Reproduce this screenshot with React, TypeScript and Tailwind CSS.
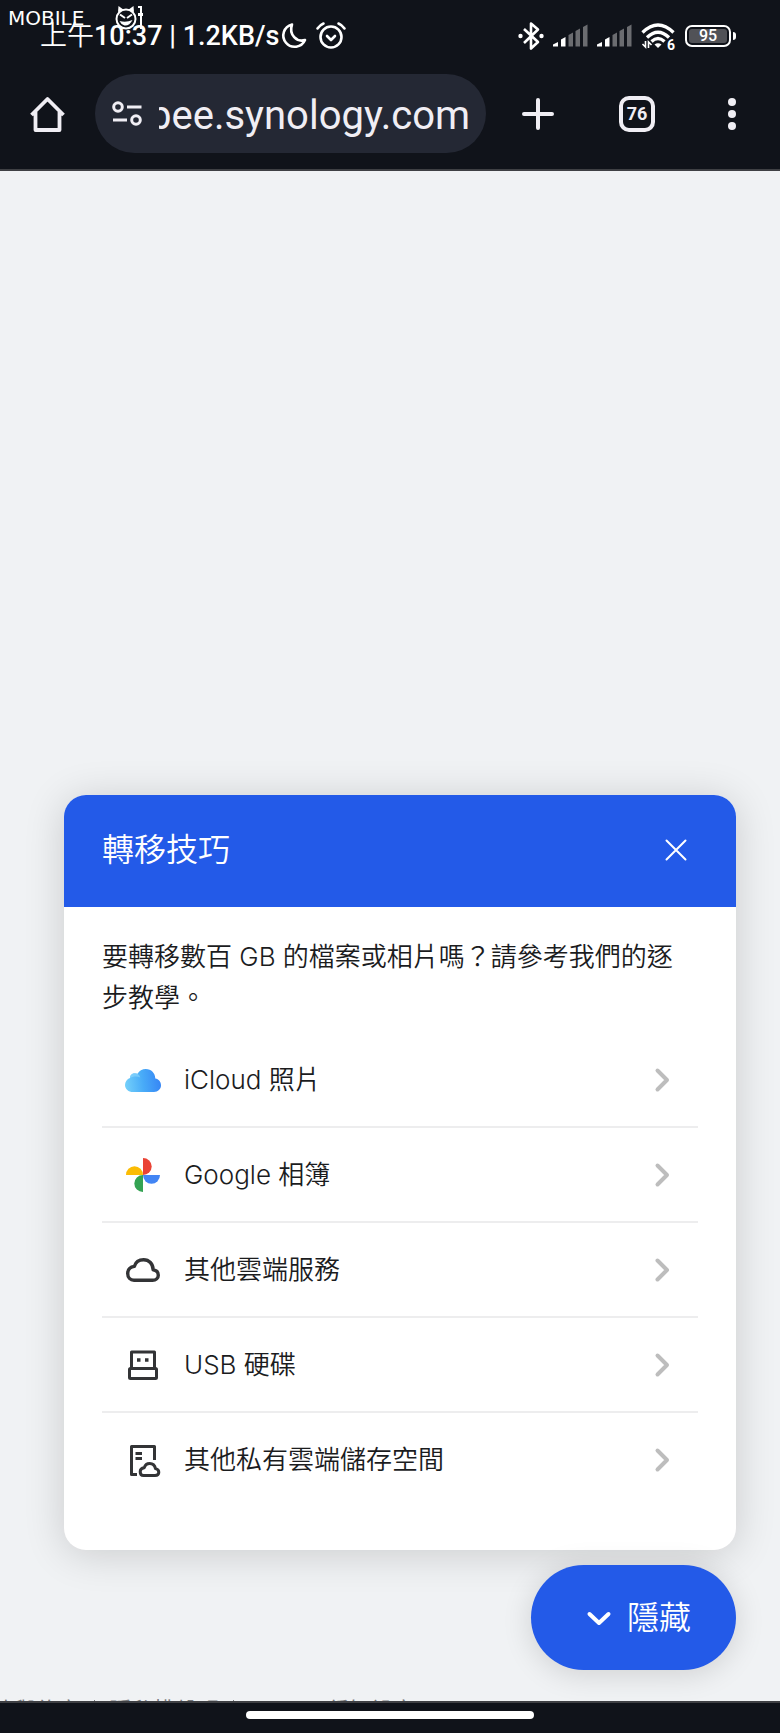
import { useEffect, useRef, useState } from 'react';

const CloudOutline = () => (
  <svg className="size-10" viewBox="0 0 40 40" fill="none" stroke="#333436" strokeWidth="3.4" strokeLinejoin="round">
    <path d="M11 30.300H29.500C33 30.300 35.300 28 35.300 25.200C35.300 22.300 33.200 20.300 30.200 19.900C30 13.800 26.100 9.700 20.600 9.700C16 9.700 12.500 12.300 11.300 16.400C7.400 17 4.700 19.600 4.700 23.500C4.700 27.500 7.400 30.300 11 30.300Z" />
  </svg>
);

const ICloudIcon = () => (
  <svg className="size-10" viewBox="0 0 40 40">
    <defs>
      <linearGradient id="icloud" x1="2" y1="24" x2="38" y2="20" gradientUnits="userSpaceOnUse">
        <stop offset="0" stopColor="#74d0fa" />
        <stop offset="0.5" stopColor="#48abf8" />
        <stop offset="1" stopColor="#3685f5" />
      </linearGradient>
    </defs>
    <path
      d="M10 32C5.500 32 2 28.900 2 24.900C2 21.600 4 19 7 17.900C6.900 15.200 9.200 13.200 12 13.200C12.900 13.200 13.700 13.400 14.500 13.800C16.200 10.900 19.200 9 22.800 9C28.200 9 32.300 13.200 32.300 18.600C35.700 19.300 38 21.900 38 25.300C38 29.200 35 32 31 32Z"
      fill="url(#icloud)"
    />
    <path d="M7 17.900C6.900 15.200 9.200 13.200 12 13.200C14.700 13.200 16.600 15 17.200 17.500C14 15.800 10 16.300 7 17.900Z" fill="#8fd9fb" opacity="0.6" />
  </svg>
);

const GooglePhotosIcon = () => (
  <svg className="size-10" viewBox="0 0 40 40">
    <path d="M20 3A8.700 8.500 0 0 1 20 20Z" fill="#ea4335" />
    <path d="M37 20A8.500 8.700 0 0 1 20 20Z" fill="#4285f4" />
    <path d="M20 37A8.700 8.500 0 0 1 20 20Z" fill="#34a353" />
    <path d="M3 20A8.500 8.700 0 0 1 20 20Z" fill="#fbbc04" />
  </svg>
);

const UsbIcon = () => (
  <svg className="size-10" viewBox="0 0 40 40" fill="none" stroke="#333436" strokeWidth="3" strokeLinejoin="round">
    <path d="M8.500 23V7H31.500V23" />
    <rect x="6.500" y="23.500" width="27" height="10" rx="1" />
    <path d="M14 15H17.500M22 15H25.500" strokeWidth="3.500" />
  </svg>
);

const ServerCloudIcon = () => (
  <svg className="size-10" viewBox="0 0 40 40" fill="none" stroke="#333436" strokeWidth="3" strokeLinejoin="round">
    <path d="M14 34.500H8.500V6.500H31.500V20" />
    <path d="M12.500 13.500H19M12.500 18.500H19" />
    <path d="M20.500 35.500H32C34.300 35.500 35.800 34.200 35.800 32.300C35.800 30.400 34.500 29 32.500 28.600C31.800 25.400 29.700 23.500 26.700 23.500C23.900 23.500 22 25.200 21.300 27.700C18.800 28 17.200 29.500 17.200 31.700C17.200 34 18.600 35.500 20.500 35.500Z" />
  </svg>
);

const guides = [
  { label: 'iCloud 照片', icon: ICloudIcon },
  { label: 'Google 相簿', icon: GooglePhotosIcon },
  { label: '其他雲端服務', icon: CloudOutline },
  { label: 'USB 硬碟', icon: UsbIcon },
  { label: '其他私有雲端儲存空間', icon: ServerCloudIcon },
];

const SignalIcon = () => (
  <svg className="h-6 w-9" viewBox="0 0 36 24">
    <path d="M0 20.500L5 18V22.500H0Z" fill="#fff" />
    <path d="M8 15.500L12.500 13V22.500H8Z" fill="#fff" />
    <path d="M15.500 11L20 8.500V22.500H15.500Z" fill="#6b6c70" />
    <path d="M22.500 7L27 4.500V22.500H22.500Z" fill="#6b6c70" />
    <path d="M30 3L34.500 0.500V22.500H30Z" fill="#6b6c70" />
  </svg>
);

function StatusBar() {
  return (
    <div className="flex h-[74px] items-center justify-between pr-11 pb-[2px] pl-10 text-white">
      <div className="flex items-center">
        <span className="text-[27px] leading-8 font-medium">
          <span className="font-[350]">上午</span>10:37 | 1.2KB/s
        </span>
        <svg className="size-8" viewBox="0 0 32 32" fill="none" stroke="#fff" strokeWidth="2.600" strokeLinejoin="round">
          <path d="M13 4.500A11.300 11.300 0 1 0 26 20C18 22.500 9.500 15 13 4.500Z" />
        </svg>
        <svg className="ml-1 size-8" viewBox="0 0 32 32" fill="none" stroke="#fff" strokeWidth="2.600" strokeLinecap="round" strokeLinejoin="round">
          <circle cx="16" cy="17" r="10.500" />
          <path d="M12 16L16 20L20 16M2.500 8.500Q5 5 8.500 3.500M29.500 8.500Q27 5 23.500 3.500" />
        </svg>
      </div>
      <div className="flex items-center">
        <svg className="h-8 w-7" viewBox="0 0 28 32" fill="none" stroke="#fff" strokeWidth="2.600" strokeLinejoin="round">
          <path d="M7 9L21 22L14 28.500V3.500L21 9.500L7 23" />
          <circle cx="3.500" cy="16" r="2.200" fill="#fff" stroke="none" />
          <circle cx="24.500" cy="16" r="2.200" fill="#fff" stroke="none" />
        </svg>
        <div className="ml-2 flex items-center gap-2">
          <SignalIcon />
          <SignalIcon />
          <svg className="h-8 w-9" viewBox="0 0 36 32">
            <g fill="none" stroke="#fff" strokeWidth="3.300">
              <path d="M1.500 12.500Q17 -2.500 32.500 12.500" />
              <path d="M6 17.500Q17 7 28 17.500" />
              <path d="M10.500 21.500Q17 15.500 23.500 21.500" />
            </g>
            <path d="M13.500 24.500Q17 21.800 20.500 24.500L17 28Z" fill="#fff" />
            <path d="M4.500 21V27L1.500 24M7.500 28V22L10.500 25" fill="none" stroke="#fff" strokeWidth="1.600" />
            <text x="26" y="30" fill="#fff" fontSize="14" fontWeight="700">6</text>
          </svg>
        </div>
        <div className="ml-2 flex h-[22px] w-[46px] items-center justify-center rounded-[7px] border-2 border-white p-[2px]">
          <span className="flex h-full w-full items-center justify-center rounded-[3px] bg-[#515257] text-base leading-4 font-medium">95</span>
        </div>
        <span className="ml-[2px] h-2 w-[3px] rounded-r-full bg-white" />
      </div>
    </div>
  );
}

function Toolbar() {
  const urlRef = useRef<HTMLInputElement>(null);

  // keep the end of the host name in view
  useEffect(() => {
    if (urlRef.current) urlRef.current.scrollLeft = urlRef.current.scrollWidth;
  }, []);

  return (
    <div className="flex items-center px-6 pb-4 text-[#f0eef4]">
      <button type="button" aria-label="首頁" className="flex size-12 items-center justify-center">
        <svg className="size-10" viewBox="0 0 40 40" fill="none" stroke="currentColor" strokeWidth="3.800" strokeLinejoin="round">
          <path d="M3.500 21L19.500 5L35.500 21M7.500 18V36H31.500V18" />
        </svg>
      </button>
      <div className="ml-[23px] flex h-[79px] min-w-0 flex-1 items-center rounded-full bg-[#242834] px-4">
        <button type="button" aria-label="網站資訊" className="shrink-0">
          <svg className="size-8" viewBox="0 0 32 32" fill="none" stroke="currentColor" strokeWidth="3">
            <circle cx="7" cy="9" r="4.300" />
            <circle cx="25" cy="22" r="4.300" />
            <path d="M16 9H30.500M2 22H16" />
          </svg>
        </button>
        <input
          ref={urlRef}
          aria-label="網址"
          className="ml-4 h-14 min-w-0 flex-1 bg-transparent pt-1 text-[40px] outline-none"
          defaultValue="bee.synology.com"
        />
      </div>
      <button type="button" aria-label="新分頁" className="ml-7 flex size-12 items-center justify-center">
        <svg className="size-8" viewBox="0 0 32 32" stroke="currentColor" strokeWidth="4" strokeLinecap="round">
          <path d="M16 2V30M2 16H30" />
        </svg>
      </button>
      <button type="button" className="ml-[51px] flex size-12 items-center justify-center">
        <span className="flex size-9 items-center justify-center rounded-[10px] border-4 border-current text-lg font-bold">76</span>
      </button>
      <button type="button" aria-label="更多" className="ml-[47px] flex size-12 items-center justify-center">
        <svg className="size-9" viewBox="0 0 36 36" fill="currentColor">
          <circle cx="18" cy="6" r="4" />
          <circle cx="18" cy="18" r="4" />
          <circle cx="18" cy="30" r="4" />
        </svg>
      </button>
    </div>
  );
}

function Watermark() {
  return (
    <div className="absolute top-1 left-2 flex items-center text-white">
      <span className="w-[106px] font-['DejaVu_Sans'] text-xl leading-6">MOBILE</span>
      <svg className="h-7 w-8" viewBox="0 0 32 28">
        <circle cx="12" cy="15" r="9.500" fill="none" stroke="#fff" strokeWidth="2" />
        <path d="M4 8L4.500 2L10 6M14 6L19.500 2L20 8" fill="#fff" />
        <path d="M6 10.500L11 14M18 10.500L13 14" stroke="#fff" strokeWidth="2" />
        <path d="M5.500 17Q12 19 18.500 16Q15.500 22 10.500 21.500Q7 20.500 5.500 17Z" fill="#fff" />
        <path d="M24 2H28V25H26V4H24ZM24 9H29V12H24Z" fill="#fff" />
      </svg>
    </div>
  );
}

export default function App() {
  const [open, setOpen] = useState(true);

  return (
    <div lang="zh-Hant" className="flex min-h-screen flex-col bg-[#f0f2f4] font-[Inter,'Noto_Sans_CJK_TC',sans-serif]">
      <header className="relative border-b-2 border-[#3f4044] bg-[#10131a] font-[Roboto,'Noto_Sans_CJK_TC',sans-serif]">
        <StatusBar />
        <Toolbar />
        <Watermark />
      </header>

      <main className="flex flex-1 flex-col items-end justify-end pr-11 pb-[27px] pl-16">
        {open && (
          <section className="mb-[15px] w-full overflow-hidden rounded-[22px] bg-white text-[#1b1c1e] shadow-[0_4px_40px_rgba(0,0,0,0.16)]">
            <div className="flex h-28 items-center justify-between bg-[#235ae8] pr-10 pb-[2px] pl-[38px] text-white">
              <h1 className="text-[32px] font-[350]">轉移技巧</h1>
              <button type="button" aria-label="關閉" onClick={() => setOpen(false)} className="flex size-10 items-center justify-center">
                <svg className="size-6" viewBox="0 0 24 24" stroke="currentColor" strokeWidth="2" strokeLinecap="round">
                  <path d="M2.500 2.500L21.500 21.500M21.500 2.500L2.500 21.500" />
                </svg>
              </button>
            </div>
            <div className="px-[38px] pt-[29px] pb-11">
              <p className="text-[26px] leading-[41px] font-[350]">要轉移數百 GB 的檔案或相片嗎？請參考我們的逐步教學。</p>
              <ul className="mt-[15px] divide-y-2 divide-[#ededee]">
                {guides.map(({ label, icon: Icon }) => (
                  <li key={label}>
                    <a href="#" className="flex h-[93px] items-center pr-4 pl-[21px]">
                      <Icon />
                      <span className="ml-[21px] flex-1 text-[26px] font-[350]">{label}</span>
                      <svg className="size-10" viewBox="0 0 40 40" fill="none" stroke="#bdbdbd" strokeWidth="4" strokeLinecap="round" strokeLinejoin="round">
                        <path d="M15.500 10.500L25 20L15.500 29.500" />
                      </svg>
                    </a>
                  </li>
                ))}
              </ul>
            </div>
          </section>
        )}
        <button
          type="button"
          onClick={() => setOpen(!open)}
          className="flex h-[105px] items-center rounded-full bg-[#235ae8] pr-[45px] pl-12 text-[32px] font-[350] text-white shadow-[0_4px_30px_rgba(0,0,0,0.14)]"
        >
          <svg className="mr-2 size-10" viewBox="0 0 40 40" fill="none" stroke="currentColor" strokeWidth="4" strokeLinecap="round" strokeLinejoin="round">
            <path d="M10.500 16L20 25L29.500 16" />
          </svg>
          {open ? '隱藏' : '顯示'}
        </button>
      </main>

      <footer className="h-1 overflow-hidden">
        <p className="-ml-2 flex gap-[14px] text-[22px] leading-[26px] whitespace-nowrap text-[#77797c]">
          <span>款與約定</span>
          <span className="mt-[3px] h-4 w-px bg-current" />
          <span>隱私權聲明</span>
          <span className="mt-[3px] h-4 w-px bg-current" />
          <span>Cookie 偏好設定</span>
        </p>
      </footer>
      <div className="flex h-8 justify-center border-t-2 border-[#3f4044] bg-[#10131a] pt-2">
        <span className="h-2 w-[37%] rounded-full bg-white" />
      </div>
    </div>
  );
}
